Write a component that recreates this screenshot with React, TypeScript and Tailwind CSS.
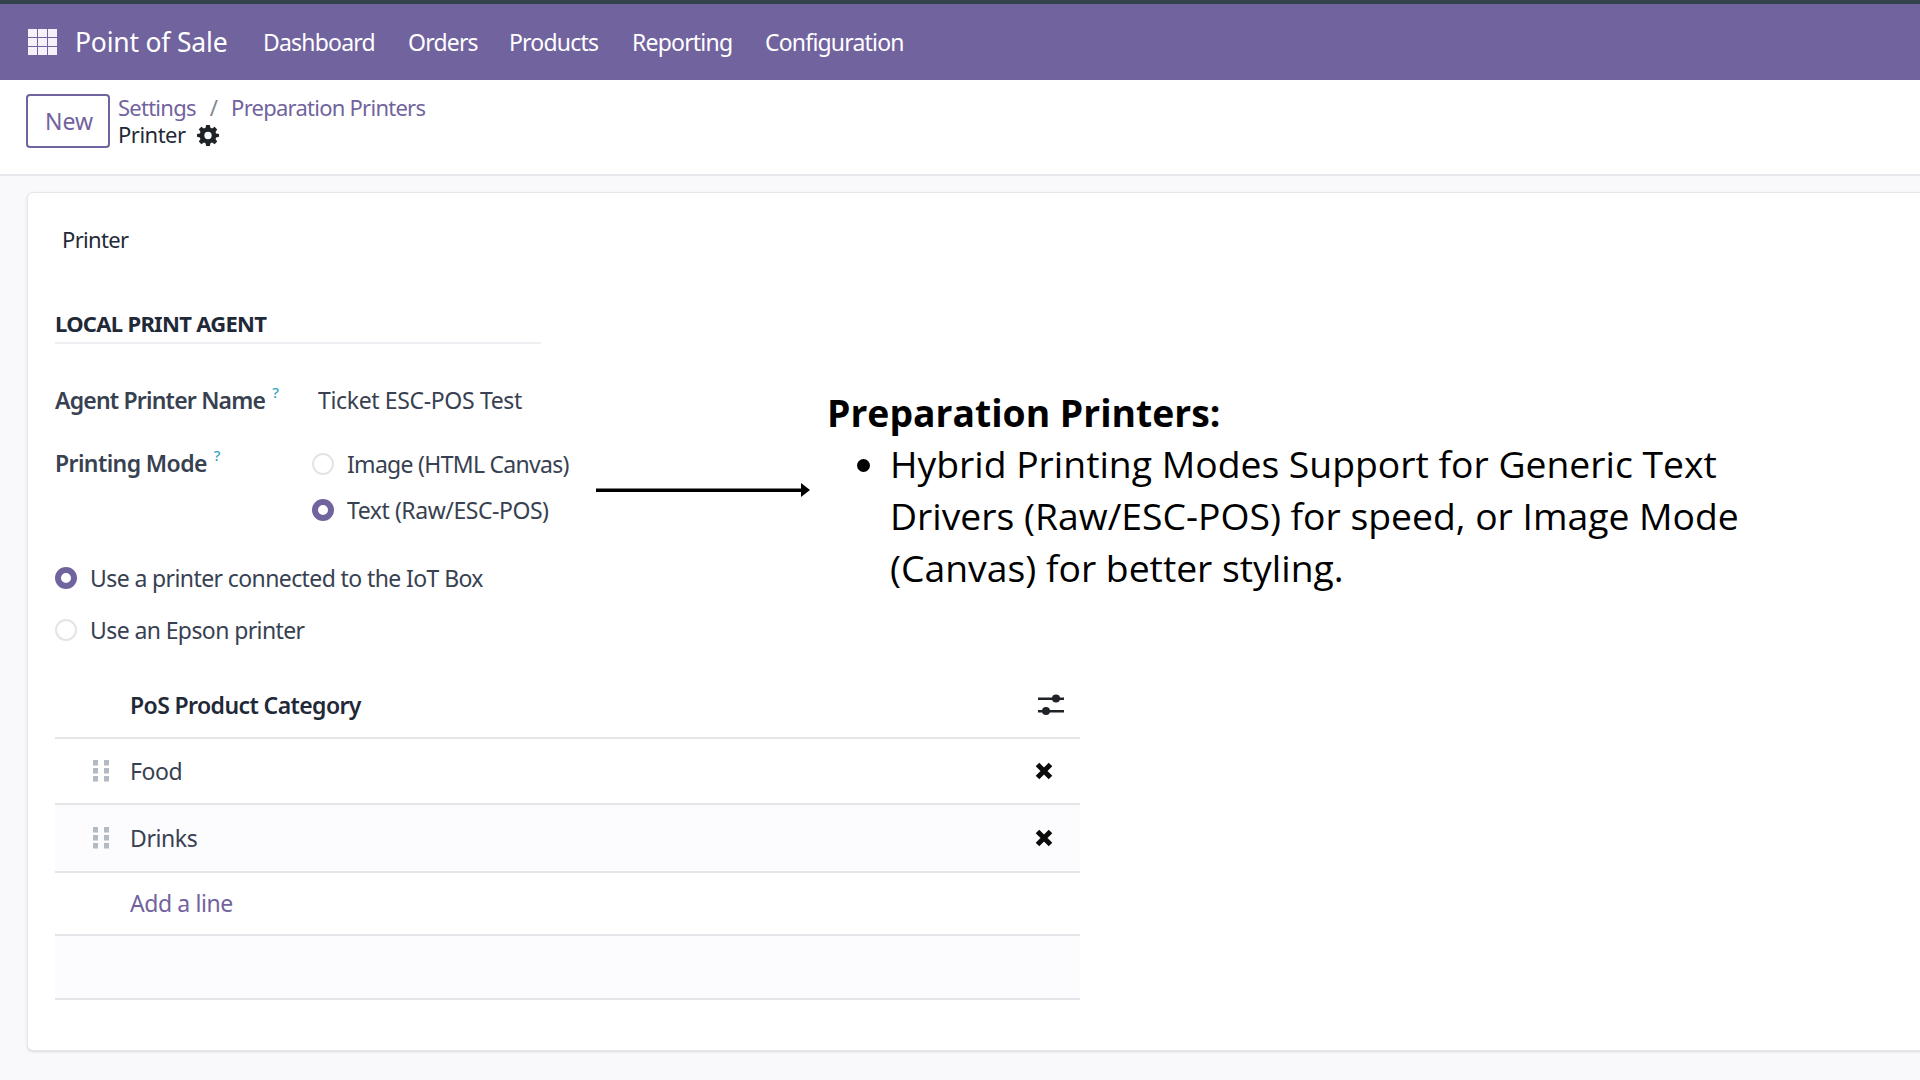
const NAV = [
  { label: "Dashboard", width: "w-[145px]" },
  { label: "Orders", width: "w-[101px]" },
  { label: "Products", width: "w-[123px]" },
  { label: "Reporting", width: "w-[133px]" },
  { label: "Configuration", width: "w-[141px]" },
];

function AppsIcon() {
  return (
    <svg width="30" height="27" viewBox="0 0 30 27" fill="#f6f0f8">
      {[0, 1, 2].map((r) =>
        [0, 1, 2].map((c) => <rect key={`${r}-${c}`} x={c * 10} y={r * 9} width="9" height="8" />)
      )}
    </svg>
  );
}

function Gear() {
  return (
    <svg width="22" height="22" viewBox="0 0 24 24" fill="#1f2328">
      <path
        fillRule="evenodd"
        d="M10 1h4l.7 3.2 1.7.7 2.8-1.8 2.8 2.8-1.8 2.8.7 1.7L24 11v3l-3.1.7-.7 1.7 1.8 2.8-2.8 2.8-2.8-1.8-1.7.7L14 24h-4l-.7-3.1-1.7-.7-2.8 1.8L2 19.200l1.800-2.800-.7-1.700L0 14v-3l3.100-.7.7-1.700L2 5.800 4.800 3l2.800 1.800 1.700-.7L10 1zm2 7.500a4 4 0 1 0 0 8 4 4 0 0 0 0-8z"
      />
    </svg>
  );
}

function Radio({ on }: { on?: boolean }) {
  if (on) {
    return <span className="block size-[22px] shrink-0 rounded-full border-[6px] border-[#71639e] bg-white" />;
  }
  return <span className="block size-[22px] shrink-0 rounded-full border-2 border-[#e2e4e8] bg-white" />;
}

function Help() {
  return <sup className="-top-[11px] ml-[7px] text-[15px] font-medium text-[#35a5bd]">?</sup>;
}

function Grip() {
  return (
    <svg width="16" height="22" viewBox="0 0 16 22" fill="#b4bac1">
      {[0, 8, 16].map((y) => (
        <g key={y}>
          <rect x="0" y={y} width="5" height="5.500" />
          <rect x="11" y={y} width="5" height="5.500" />
        </g>
      ))}
    </svg>
  );
}

function Cross() {
  return (
    <svg width="18" height="18" viewBox="0 0 18 18" fill="none" stroke="#0b0b0b" strokeWidth="5">
      <path d="M2.500 2.500l13 13M15.500 2.500l-13 13" />
    </svg>
  );
}

function Sliders() {
  return (
    <svg width="26" height="24" viewBox="0 0 26 24" fill="#1f2328">
      <rect x="0" y="4.500" width="26" height="2.500" />
      <circle cx="18" cy="5.500" r="4" />
      <rect x="0" y="17" width="26" height="2.500" />
      <circle cx="8" cy="18" r="4" />
    </svg>
  );
}

function Row({ label, shaded, height }: { label: string; shaded?: boolean; height: string }) {
  return (
    <div className={`flex ${height} items-center border-b-2 border-[#e4e5e9] ${shaded ? "bg-[#fcfbfe]" : ""}`}>
      <div className="flex w-[75px] justify-end pr-[21px]">
        <Grip />
      </div>
      <span className="text-[#374151]">{label}</span>
      <div className="ml-auto mr-[27px] flex">
        <Cross />
      </div>
    </div>
  );
}

export default function App() {
  return (
    <div className="relative flex h-[1080px] w-[1920px] flex-col overflow-hidden bg-[#f9f9fc] text-[23px] text-[#374151] [font-family:'Noto_Sans','Open_Sans',sans-serif]">
      <header className="flex h-[80px] items-center border-t-4 border-[#33434a] bg-[#71639e] pl-[28px] text-white">
        <AppsIcon />
        <span className="ml-[17px] w-[188px] pt-[2px] text-[26.500px] tracking-[-0.2px]">Point of Sale</span>
        {NAV.map((n) => (
          <span key={n.label} className={`${n.width} text-[23px] tracking-[-0.8px]`}>
            {n.label}
          </span>
        ))}
      </header>

      <div className="flex h-[96px] items-start border-b-2 border-[#e6e7eb] bg-white pl-[26px] pt-[14px]">
        <button className="h-[54px] w-[84px] rounded-[4px] border-2 border-[#71639e] bg-white pl-[2px] text-[23px] text-[#71639e]">New</button>
        <div className="ml-[8px] flex flex-col text-[22px] leading-[27px]">
          <div className="tracking-[-0.75px] text-[#71639e]">
            Settings <span className="mx-[9px] text-[#7b8794]">/</span> Preparation Printers
          </div>
          <div className="flex items-center gap-[11px] tracking-[-0.5px] text-[#1f2937]">
            Printer <Gear />
          </div>
        </div>
      </div>

      <main className="flex-1 pl-[27px] pt-[16px]">
        <div className="h-[859px] w-[1910px] rounded-l-[6px] border border-[#e6e7eb] bg-white pl-[27px] shadow-sm">
          <div className="pl-[7px] pt-[30px] text-[22px] leading-[32px] tracking-[-0.65px] text-[#1f2937]">Printer</div>

          <div className="mt-[52px] w-[486px] border-b-2 border-[#eeeff2] pb-[3px] text-[22px] leading-[32px] font-bold tracking-[-0.7px] text-[#1f2937]">
            LOCAL PRINT AGENT
          </div>

          <div className="mt-[40px] flex h-[32px] items-center">
            <span className="w-[263px] font-semibold tracking-[-0.8px]">
              Agent Printer Name
              <Help />
            </span>
            <span className="tracking-[-0.35px]">Ticket ESC-POS Test</span>
          </div>

          <div className="mt-[30px] flex">
            <span className="w-[257px] font-semibold tracking-[-0.6px]">
              Printing Mode
              <Help />
            </span>
            <div className="flex flex-col gap-[14px] pt-[2px]">
              <label className="flex h-[32px] items-center gap-[13px] tracking-[-0.7px]">
                <Radio /> Image (HTML Canvas)
              </label>
              <label className="flex h-[32px] items-center gap-[13px] tracking-[-0.45px]">
                <Radio on /> Text (Raw/ESC-POS)
              </label>
            </div>
          </div>

          <div className="mt-[36px] flex flex-col gap-[20px]">
            <label className="flex h-[32px] items-center gap-[13px] tracking-[-0.6px]">
              <Radio on /> Use a printer connected to the IoT Box
            </label>
            <label className="flex h-[32px] items-center gap-[13px] tracking-[-0.6px]">
              <Radio /> Use an Epson printer
            </label>
          </div>

          <div className="mt-[27px] w-[1025px] tracking-[-0.4px]">
            <div className="flex h-[66px] items-center border-b-2 border-[#e4e5e9] pl-[75px] font-semibold tracking-[-0.6px] text-[#1f2937]">
              PoS Product Category
              <div className="ml-auto mr-[16px] flex">
                <Sliders />
              </div>
            </div>
            <Row label="Food" height="h-[66px]" />
            <Row label="Drinks" height="h-[68px]" shaded />
            <div className="flex h-[63px] items-center border-b-2 border-[#e4e5e9] pl-[75px] text-[#71639e]">Add a line</div>
            <div className="h-[64px] border-b-2 border-[#e4e5e9] bg-[#fcfbfe]" />
          </div>
        </div>
      </main>

      {/* callout sits on top of the form, it's part of the video overlay */}
      <div className="absolute left-[596px] top-[393px] flex items-start text-black [font-family:'Open_Sans',sans-serif]">
        <svg width="214" height="20" viewBox="0 0 214 20" className="mt-[87px]" fill="#000000">
          <rect x="0" y="8.500" width="206" height="3.500" />
          <path d="M205 3l9 7-9 7z" />
        </svg>
        <div className="ml-[17px] w-[950px]">
          <div className="text-[37.300px] leading-[40px] font-bold">Preparation Printers:</div>
          <ul className="mt-[5px] list-disc pl-[63px] text-[37.300px] leading-[52px]">
            <li>Hybrid Printing Modes Support for Generic Text Drivers (Raw/ESC-POS) for speed, or Image Mode (Canvas) for better styling.</li>
          </ul>
        </div>
      </div>
    </div>
  );
}
